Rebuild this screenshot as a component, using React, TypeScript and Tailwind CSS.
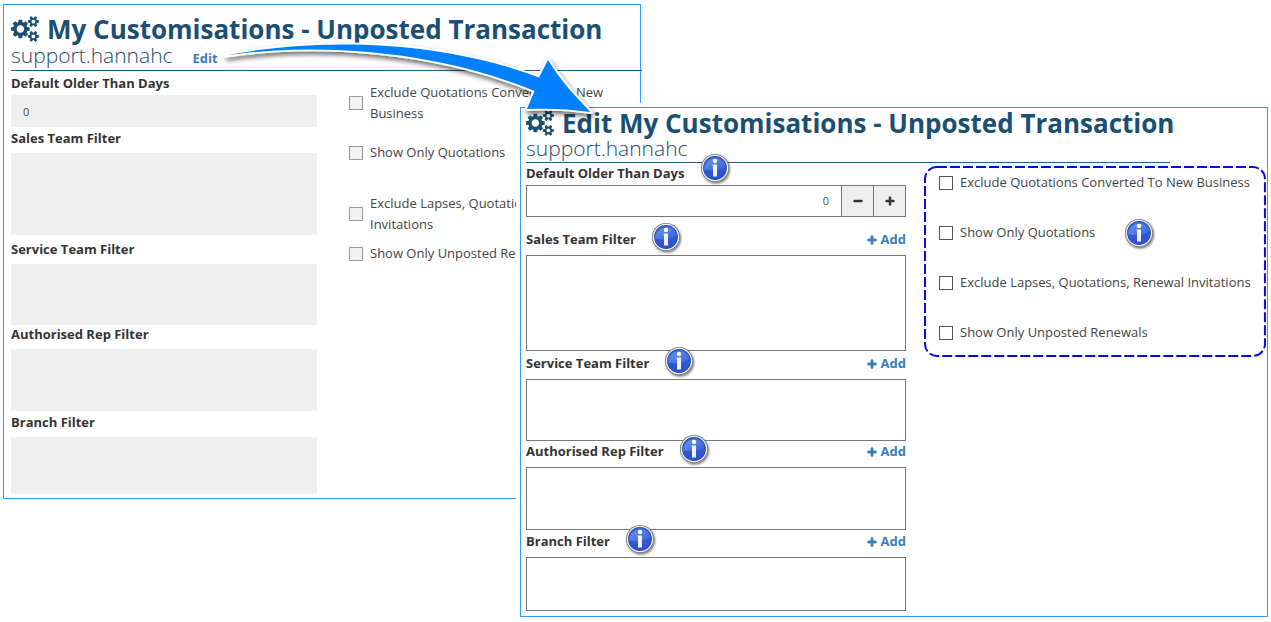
import { useId } from "react";
import { FaMinus, FaPlus } from "react-icons/fa";

type Filter = {
    label: string;
    spacing: string;
    height: string;
};

const savedFilters: Filter[] = [
    { label: "Sales Team Filter", spacing: "mt-0.5", height: "h-[82px]" },
    { label: "Service Team Filter", spacing: "mt-[5px]", height: "h-[61px]" },
    { label: "Authorised Rep Filter", spacing: "mt-0", height: "h-[62px]" },
    { label: "Branch Filter", spacing: "mt-0.5", height: "h-[57px]" },
];

const editFilters: Filter[] = [
    { label: "Sales Team Filter", spacing: "mt-3", height: "h-24" },
    { label: "Service Team Filter", spacing: "mt-0.5", height: "h-[62px]" },
    { label: "Authorised Rep Filter", spacing: "mt-0", height: "h-[63px]" },
    { label: "Branch Filter", spacing: "mt-px", height: "h-[54px]" },
];

const savedOptions = [
    { label: "Exclude Quotations Converted To New Business", spacing: "mt-0" },
    { label: "Show Only Quotations", spacing: "mt-[18px]" },
    { label: "Exclude Lapses, Quotations, Renewal Invitations", spacing: "mt-[30px]" },
    { label: "Show Only Unposted Renewals", spacing: "mt-2" },
];

const editOptions = [
    { label: "Exclude Quotations Converted To New Business", info: false },
    { label: "Show Only Quotations", info: true },
    { label: "Exclude Lapses, Quotations, Renewal Invitations", info: false },
    { label: "Show Only Unposted Renewals", info: false },
];

function CogsIcon() {
    return (
        <svg viewBox="0 0 1920 1792" fill="currentColor" className="w-7 h-[26px] shrink-0" aria-hidden="true">
            <path d="M896 896q0-106-75-181t-181-75-181 75-75 181 75 181 181 75 181-75 75-181zm768 512q0-52-38-90t-90-38-90 38-38 90q0 53 37.5 90.5t90.5 37.5 90.5-37.5 37.5-90.5zm0-1024q0-52-38-90t-90-38-90 38-38 90q0 53 37.5 90.5t90.5 37.5 90.5-37.5 37.5-90.5zm-384 421v185q0 10-7 19.5t-16 10.5l-155 24q-11 35-32 76 34 48 90 115 7 11 7 20 0 12-7 19-23 30-82.5 89.5t-78.5 59.5q-11 0-21-7l-115-90q-37 19-77 31-11 108-23 155-7 24-30 24h-186q-11 0-20-7.5t-10-17.5l-23-153q-34-10-75-31l-118 89q-7 7-20 7-11 0-21-8-144-133-144-160 0-9 7-19 10-14 41-53t47-61q-23-44-35-82l-152-24q-10-1-17-9.5t-7-19.5v-185q0-10 7-19.5t16-10.5l155-24q11-35 32-76-34-48-90-115-7-11-7-20 0-12 7-20 22-30 82-89t79-59q11 0 21 7l115 90q34-18 77-32 11-108 23-154 7-24 30-24h186q11 0 20 7.5t10 17.5l23 153q34 10 75 31l118-89q8-7 20-7 11 0 21 8 144 133 144 160 0 8-7 19-12 16-42 54t-45 60q23 48 34 82l152 23q10 2 17 10.5t7 19.5zm640 533v140q0 16-149 31-12 27-30 52 51 113 51 138 0 4-4 7-122 71-124 71-8 0-46-47t-52-68q-20 2-30 2t-30-2q-14 21-52 68t-46 47q-2 0-124-71-4-3-4-7 0-25 51-138-18-25-30-52-149-15-149-31v-140q0-16 149-31 13-29 30-52-51-113-51-138 0-4 4-7 4-2 35-20t59-34 30-16q8 0 46 46.5t52 67.5q20-2 30-2t30 2q51-71 92-112l6-2q4 0 124 70 4 3 4 7 0 25-51 138 17 23 30 52 149 15 149 31zm0-1024v140q0 16-149 31-12 27-30 52 51 113 51 138 0 4-4 7-122 71-124 71-8 0-46-47t-52-68q-20 2-30 2t-30-2q-14 21-52 68t-46 47q-2 0-124-71-4-3-4-7 0-25 51-138-18-25-30-52-149-15-149-31v-140q0-16 149-31 13-29 30-52-51-113-51-138 0-4 4-7 4-2 35-20t59-34 30-16q8 0 46 46.5t52 67.5q20-2 30-2t30 2q51-71 92-112l6-2q4 0 124 70 4 3 4 7 0 25-51 138 17 23 30 52 149 15 149 31z" />
        </svg>
    );
}

function InfoIcon() {
    const id = useId();

    return (
        <svg viewBox="0 0 36 36" className="w-9 h-9 -m-1 shrink-0" role="img" aria-label="Info">
            <defs>
                <linearGradient id={`${id}-ball`} x1="0" y1="0" x2="0" y2="1">
                    <stop offset="0" stopColor="#3a63d0" />
                    <stop offset="1" stopColor="#2c50d4" />
                </linearGradient>
                <linearGradient id={`${id}-gloss`} x1="0" y1="0" x2="1" y2="1">
                    <stop offset="0" stopColor="#6c96ee" />
                    <stop offset="1" stopColor="#3560d4" />
                </linearGradient>
                <filter id={`${id}-shadow`} x="-30%" y="-30%" width="160%" height="160%">
                    <feDropShadow dx="1" dy="1.5" stdDeviation="1.3" floodColor="#000" floodOpacity="0.55" />
                </filter>
            </defs>
            <circle cx="18" cy="18" r="14" fill="#777" filter={`url(#${id}-shadow)`} />
            <circle cx="18" cy="18" r="13.2" fill="#f4f4f4" />
            <circle cx="18" cy="18" r="11.9" fill="#2143b4" />
            <circle cx="18" cy="18" r="11.2" fill={`url(#${id}-ball)`} />
            <path d="M7.1 19.5A11.2 11.2 0 0 1 28.8 15.5C25 19.5 15 21.5 7.1 19.5Z" fill={`url(#${id}-gloss)`} />
            <circle cx="18" cy="11" r="2.2" fill="#fff" />
            <path d="M15.6 14.6H20V26.6H16V16.2H15.6Z" fill="#f1f1f1" />
        </svg>
    );
}

function PanelTitle({ children }: { children: string }) {
    return (
        <h1 className="flex items-center gap-2 text-[26px] leading-[30px] font-bold whitespace-nowrap text-[#1b4f72]">
            <CogsIcon />
            {children}
        </h1>
    );
}

function SavedPanel() {
    return (
        <section className="col-start-1 col-span-2 row-start-1 self-start mt-1 border border-[#3399ff] pl-[7px] pt-[9px] pb-1">

            <PanelTitle>My Customisations - Unposted Transaction</PanelTitle>

            <div className="flex items-baseline gap-5 h-[27px] pt-px -mr-0.5 border-b border-[#1f5c87]">
                <span className="text-[21px] leading-5 font-light text-[#1f4a70]">support.hannahc</span>
                <a href="#edit" className="text-[13px] font-bold text-[#3f7cba]">Edit</a>
            </div>

            <div className="flex gap-8 text-[13px]">

                <div className="w-[306px] shrink-0">
                    <label htmlFor="saved-days" className="flex items-center h-6 pt-0.5 font-bold text-[#333]">
                        Default Older Than Days
                    </label>
                    <input
                        id="saved-days"
                        readOnly
                        value="0"
                        className="block w-full h-8 px-3 text-[11px] text-[#444] bg-[#efefef]"
                    />

                    {savedFilters.map((filter, index) => (
                        <div key={filter.label} className={filter.spacing}>
                            <label
                                htmlFor={`saved-filter-${index}`}
                                className="block h-6 leading-[18px] font-bold text-[#333]"
                            >
                                {filter.label}
                            </label>
                            <textarea
                                id={`saved-filter-${index}`}
                                readOnly
                                className={`block w-full resize-none bg-[#efefef] ${filter.height}`}
                            />
                        </div>
                    ))}
                </div>

                <div className="flex-1 min-w-0 pt-[11px] pr-2">
                    {savedOptions.map((option) => (
                        <label
                            key={option.label}
                            className={`flex items-center gap-[7px] leading-[21px] text-[#444] ${option.spacing}`}
                        >
                            <input
                                type="checkbox"
                                disabled
                                className="appearance-none w-3.5 h-3.5 shrink-0 border border-[#999] bg-[#f2f2f2]"
                            />
                            {option.label}
                        </label>
                    ))}
                </div>

            </div>

        </section>
    );
}

function EditPanel() {
    return (
        <section className="col-start-2 col-span-2 row-start-1 self-start z-10 mt-[103px] pt-1 pl-1 bg-white">
            <div className="border border-[#3399ff] pl-[5px] pb-[5px]">

                <PanelTitle>Edit My Customisations - Unposted Transaction</PanelTitle>

                <div className="h-[25px] mr-[97px] border-b border-[#1f5c87]">
                    <span className="block text-[21px] leading-5 font-light text-[#1f4a70]">support.hannahc</span>
                </div>

                <div className="flex gap-[18px] text-[13px]">

                    <div className="w-[380px] shrink-0">
                        <div className="flex items-center gap-[17px] h-[22px]">
                            <label htmlFor="edit-days" className="font-bold text-[#333]">
                                Default Older Than Days
                            </label>
                            <span className="-mt-3">
                                <InfoIcon />
                            </span>
                        </div>
                        <div className="flex h-8 border border-[#777]">
                            <input
                                id="edit-days"
                                defaultValue="0"
                                className="flex-1 min-w-0 px-3 text-[11px] text-right text-[#555]"
                            />
                            <button
                                aria-label="Decrease"
                                className="flex items-center justify-center w-8 border-l border-[#777] bg-[#eee] text-[#333]"
                            >
                                <FaMinus strokeWidth={30} className="w-2.5 h-2.5" />
                            </button>
                            <button
                                aria-label="Increase"
                                className="flex items-center justify-center w-8 border-l border-[#777] bg-[#eee] text-[#333]"
                            >
                                <FaPlus strokeWidth={30} className="w-2.5 h-2.5" />
                            </button>
                        </div>

                        {editFilters.map((filter, index) => (
                            <div key={filter.label} className={filter.spacing}>
                                <div className="flex items-center gap-4 h-[26px] pb-1">
                                    <label htmlFor={`edit-filter-${index}`} className="font-bold text-[#333]">
                                        {filter.label}
                                    </label>
                                    <span className="-my-2 pb-1.5">
                                        <InfoIcon />
                                    </span>
                                    <button className="flex items-center gap-1 ml-auto font-bold text-[#3a7ebb]">
                                        <FaPlus strokeWidth={50} className="w-2.5 h-2.5" />
                                        Add
                                    </button>
                                </div>
                                <textarea
                                    id={`edit-filter-${index}`}
                                    className={`block w-full resize-none border border-[#777] ${filter.height}`}
                                />
                            </div>
                        ))}
                    </div>

                    <div className="relative flex-1 min-w-0 self-start mt-[3px] mr-px h-[191px] pt-[7px] pl-[15px]">
                        <svg className="absolute inset-0 w-full h-full overflow-visible pointer-events-none">
                            <rect
                                x="1"
                                y="1"
                                width="99.4%"
                                height="98.9%"
                                rx="12"
                                fill="none"
                                stroke="#0808ee"
                                strokeWidth="2"
                                strokeDasharray="10 3"
                            />
                        </svg>
                        <div className="flex flex-col gap-[30px]">
                            {editOptions.map((option) => (
                                <div key={option.label} className="flex items-center gap-[30px] h-5 whitespace-nowrap">
                                    <label className="flex items-center gap-[7px] text-[#444]">
                                        <input
                                            type="checkbox"
                                            className="appearance-none w-3.5 h-3.5 shrink-0 border border-[#555] bg-white"
                                        />
                                        {option.label}
                                    </label>
                                    {option.info && <InfoIcon />}
                                </div>
                            ))}
                        </div>
                    </div>

                </div>

            </div>
        </section>
    );
}

function Arrow() {
    return (
        <svg
            viewBox="0 0 390 76"
            className="absolute left-[216px] top-[47px] w-[390px] h-[76px] overflow-visible pointer-events-none z-20"
            aria-hidden="true"
        >
            <defs>
                <filter id="arrow-shadow" x="-5%" y="-20%" width="112%" height="150%">
                    <feDropShadow dx="1.5" dy="3" stdDeviation="2.5" floodColor="#000" floodOpacity="0.6" />
                </filter>
            </defs>
            <path
                d="M10 8.5C100 -9 220 -8 323 30.5L332 13C344 33 360 50 374.5 65C354 62 332 61 311 62L318.5 44C220 3 100 -5 10 8.5Z"
                fill="#0080ff"
                stroke="#fff"
                strokeWidth="4"
                strokeLinejoin="round"
                paintOrder="stroke"
                filter="url(#arrow-shadow)"
            />
        </svg>
    );
}

export default function App() {
    return (
        <main className="relative grid grid-cols-[minmax(0,513fr)_minmax(0,125fr)_minmax(0,627fr)] px-[3px] pb-1 bg-white font-['Open_Sans',sans-serif]">
            <SavedPanel />
            <EditPanel />
            <Arrow />
        </main>
    );
}
